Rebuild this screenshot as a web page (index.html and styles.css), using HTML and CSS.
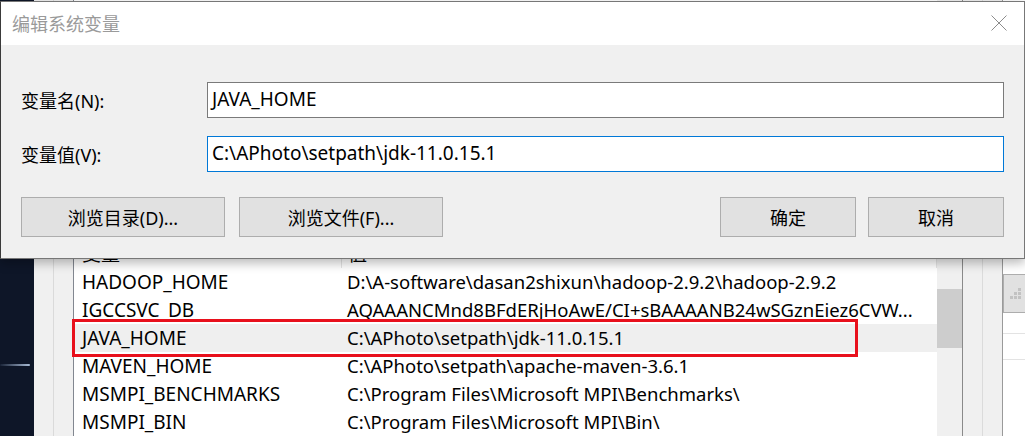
FILE: index.html
```html
<!DOCTYPE html>
<html lang="zh-CN">
<head>
  <meta charset="UTF-8">
  <title>编辑系统变量</title>
  <link rel="stylesheet" href="styles.css">
</head>
<body>

<div class="screen">
  <!-- window behind the dialog -->
  <div class="desk">
    <div class="wallpaper"><span class="glow"></span></div>
    <div class="side side-a"></div>
    <div class="side side-b"></div>

    <div class="list">
      <div class="list-head">
        <div class="col-name">变量</div>
        <div class="col-value">值</div>
      </div>
      <div class="row"><div class="col-name">HADOOP_HOME</div><div class="col-value">D:\A-software\dasan2shixun\hadoop-2.9.2\hadoop-2.9.2</div></div>
      <div class="row"><div class="col-name">IGCCSVC_DB</div><div class="col-value">AQAAANCMnd8BFdERjHoAwE/CI+sBAAAANB24wSGznEiez6CVW...</div></div>
      <div class="row selected"><div class="col-name">JAVA_HOME</div><div class="col-value">C:\APhoto\setpath\jdk-11.0.15.1</div></div>
      <div class="row"><div class="col-name">MAVEN_HOME</div><div class="col-value">C:\APhoto\setpath\apache-maven-3.6.1</div></div>
      <div class="row"><div class="col-name">MSMPI_BENCHMARKS</div><div class="col-value">C:\Program Files\Microsoft MPI\Benchmarks\</div></div>
      <div class="row"><div class="col-name">MSMPI_BIN</div><div class="col-value">C:\Program Files\Microsoft MPI\Bin\</div></div>
      <div class="highlight"></div>
    </div>

    <div class="scrollbar"><div class="thumb"></div></div>
    <div class="side side-c"></div>
    <div class="side side-d"></div>
    <div class="outer">
      <div class="outer-btn"></div>
      <div class="outer-line"></div>
      <div class="outer-line"></div>
    </div>
  </div>

  <!-- the dialog -->
  <div class="dialog">
    <div class="titlebar">
      <span class="title">编辑系统变量</span>
      <svg class="close" width="16" height="16" viewBox="0 0 16 16">
        <path d="M0.5 0.5 L15.5 15.5 M15.5 0.5 L0.5 15.5" stroke="#8c8c8c" stroke-width="1" fill="none"/>
      </svg>
    </div>
    <div class="dialog-body">
      <div class="field">
        <label class="field-label">变量名(N):</label>
        <div class="input">JAVA_HOME</div>
      </div>
      <div class="field">
        <label class="field-label">变量值(V):</label>
        <div class="input focused">C:\APhoto\setpath\jdk-11.0.15.1</div>
      </div>
      <div class="buttons">
        <button class="btn wide">浏览目录(D)...</button>
        <button class="btn wide">浏览文件(F)...</button>
        <span class="spacer"></span>
        <button class="btn">确定</button>
        <button class="btn">取消</button>
      </div>
      <svg class="grip" width="12" height="12" viewBox="0 0 12 12">
        <rect x="9" y="1" width="3" height="3" fill="#c2c2c2"/>
        <rect x="5" y="5" width="3" height="3" fill="#c2c2c2"/>
        <rect x="9" y="5" width="3" height="3" fill="#c2c2c2"/>
        <rect x="1" y="9" width="3" height="3" fill="#c2c2c2"/>
        <rect x="5" y="9" width="3" height="3" fill="#c2c2c2"/>
        <rect x="9" y="9" width="3" height="3" fill="#c2c2c2"/>
      </svg>
    </div>
  </div>
</div>

</body>
</html>
```

FILE: styles.css
```css
body {
  margin: 0;
  padding: 0;
  background-color: #9c9c9c;
  font-family: "Noto Sans", "Noto Sans CJK SC", sans-serif;
  overflow: hidden;
}
.screen {
  position: relative;
  width: 1025px;
  height: 436px;
  overflow: hidden;
}
.desk {
  display: flex;
  height: 436px;
  background-color: #f0f0f0;
}
.wallpaper {
  width: 34px;
  background-color: #0e1628;
  display: flex;
  flex-direction: column;
}
.glow {
  display: block;
  margin-top: 364px;
  width: 30px;
  height: 2px;
  background: linear-gradient(to right, rgba(120, 150, 190, 0.1), #a9bcd6);
  border-radius: 1px;
}
.side {
  background-color: #f0f0f0;
}
.side-a {
  width: 19px;
  border-right: 1px solid #dadada;
}
.side-b {
  width: 19px;
  border-right: 1px solid #828790;
}
.list {
  position: relative;
  width: 863px;
  background-color: #fff;
  padding-top: 240px;
  font-size: 19px;
  color: #000;
}
.list-head,
.row {
  display: flex;
  height: 28px;
  line-height: 28px;
}
.list-head .col-name {
  border-right: 1px solid #e5e5e5;
}
.list-head .col-value {
  border-right: 1px solid #e5e5e5;
  width: 588px;
}
.col-name {
  width: 259px;
  padding-left: 8px;
  flex-shrink: 0;
}
.col-value {
  padding-left: 6px;
  white-space: nowrap;
  overflow: hidden;
}
.row .col-value {
  font-size: 18.5px;
}
.row.selected {
  background-color: #efefef;
}
.highlight {
  position: absolute;
  left: -2px;
  top: 319px;
  width: 780px;
  height: 32px;
  border: 3px solid #e8101c;
}
.scrollbar {
  width: 25px;
  background-color: #f0f0f0;
}
.thumb {
  margin-top: 289px;
  height: 59px;
  background-color: #cdcdcd;
}
.side-c {
  width: 19px;
  border-left: 1px solid #8a8a8a;
  border-right: 1px solid #dcdcdc;
}
.side-d {
  width: 19px;
  border-right: 1px solid #9a9a9a;
  box-shadow: 2px 0 3px rgba(0, 0, 0, 0.12);
}
.outer {
  flex: 1;
  background-color: #fff;
  padding-top: 274px;
}
.outer-btn {
  height: 37px;
  background-color: #e1e1e1;
  border: 1px solid #adadad;
  border-right: none;
  margin-bottom: 20px;
}
.outer-line {
  height: 25px;
  border-top: 1px solid #e3e3e3;
}

.dialog {
  position: absolute;
  top: 1px;
  left: 0;
  width: 1023px;
  height: 256px;
  border: 1px solid #777;
  border-left-color: #3a3a3a;
  background-color: #f0f0f0;
  box-shadow: 0 4px 10px rgba(0, 0, 0, 0.28);
}
.titlebar {
  display: flex;
  align-items: center;
  justify-content: space-between;
  height: 43px;
  background-color: #fff;
  padding: 0 17px 0 11px;
}
.title {
  font-size: 18px;
  color: #9a9a9a;
  margin-top: -2px;
}
.close {
  margin-top: -2px;
}
.dialog-body {
  position: relative;
  padding: 37px 20px 0 20px;
  font-size: 18px;
}
.field {
  display: flex;
  align-items: center;
  margin-bottom: 18px;
}
.field-label {
  width: 186px;
  color: #000;
}
.input {
  flex: 1;
  height: 34px;
  line-height: 32px;
  border: 1px solid #7a7a7a;
  background-color: #fff;
  padding-left: 4px;
  white-space: nowrap;
  font-size: 19px;
}
.input.focused {
  border-color: #0078d7;
}
.buttons {
  display: flex;
  margin-top: 25px;
}
.btn {
  width: 136px;
  height: 40px;
  background-color: #e1e1e1;
  border: 1px solid #adadad;
  font-family: inherit;
  font-size: 18px;
  color: #000;
  padding: 0;
  margin-right: 12px;
}
.btn:last-child {
  margin-right: 0;
}
.btn.wide {
  width: 204px;
  margin-right: 14px;
}
.spacer {
  flex: 1;
}
.grip {
  position: absolute;
  right: 3px;
  bottom: -62px;
}
```
